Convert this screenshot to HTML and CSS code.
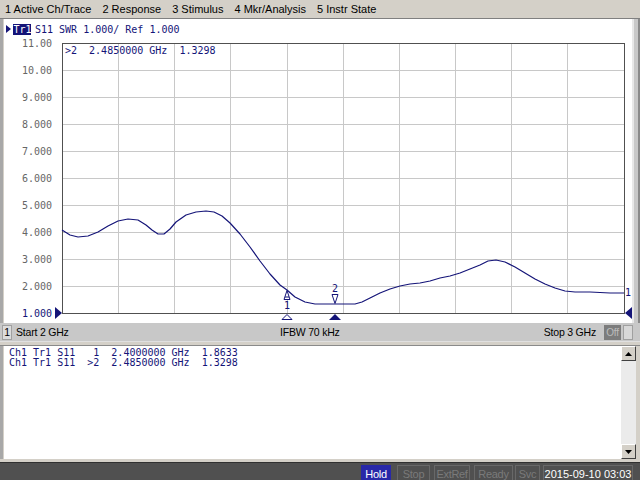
FILE: index.html
```html
<!DOCTYPE html>
<html>
<head>
<meta charset="utf-8">
<link rel="stylesheet" href="styles.css">
</head>
<body>
<div class="menubar">
  <span class="menu-item">1 Active Ch/Trace</span>
  <span class="menu-item">2 Response</span>
  <span class="menu-item">3 Stimulus</span>
  <span class="menu-item">4 Mkr/Analysis</span>
  <span class="menu-item">5 Instr State</span>
</div>
<div class="chartwin">
  <div class="chartrow">
    <div class="chartpane">
      <svg class="plot" width="628" height="304" viewBox="4 19 628 304" xmlns="http://www.w3.org/2000/svg">
        <g class="grid">
          <line x1="118" y1="43" x2="118" y2="313"/>
          <line x1="174" y1="43" x2="174" y2="313"/>
          <line x1="230" y1="43" x2="230" y2="313"/>
          <line x1="287" y1="43" x2="287" y2="313"/>
          <line x1="343" y1="43" x2="343" y2="313"/>
          <line x1="399" y1="43" x2="399" y2="313"/>
          <line x1="455" y1="43" x2="455" y2="313"/>
          <line x1="511" y1="43" x2="511" y2="313"/>
          <line x1="567" y1="43" x2="567" y2="313"/>
          <line x1="62" y1="70" x2="624" y2="70"/>
          <line x1="62" y1="97" x2="624" y2="97"/>
          <line x1="62" y1="124" x2="624" y2="124"/>
          <line x1="62" y1="151" x2="624" y2="151"/>
          <line x1="62" y1="178" x2="624" y2="178"/>
          <line x1="62" y1="205" x2="624" y2="205"/>
          <line x1="62" y1="232" x2="624" y2="232"/>
          <line x1="62" y1="259" x2="624" y2="259"/>
          <line x1="62" y1="286" x2="624" y2="286"/>
        </g>
        <rect class="frame" x="62.5" y="43.5" width="562" height="270"/>
        <g class="ylab">
          <text x="52" y="47">11.00</text>
          <text x="52" y="74">10.00</text>
          <text x="52" y="101">9.000</text>
          <text x="52" y="128">8.000</text>
          <text x="52" y="155">7.000</text>
          <text x="52" y="182">6.000</text>
          <text x="52" y="209">5.000</text>
          <text x="52" y="236">4.000</text>
          <text x="52" y="263">3.000</text>
          <text x="52" y="290">2.000</text>
          <text x="52" y="317" class="ref">1.000</text>
        </g>
        <polygon class="blue" points="6,25 11,29 6,33"/>
        <rect class="trbg" x="13" y="24" width="18" height="11"/>
        <text class="trtxt" x="13.5" y="32.5">Tr1</text>
        <text class="hdr" x="35" y="32.5">S11 SWR 1.000/ Ref 1.000</text>
        <text class="hdr" x="65" y="53.5" xml:space="preserve">&gt;2  2.4850000 GHz  1.3298</text>
        <polyline class="trace" points="62,230 70,235 78,237 88,236 98,232 108,226 118,221 128,219 138,220 146,225 152,230 158,234 164,234 170,229 176,222 186,215 196,212 206,211 214,212 222,216 230,223 240,234 250,247 260,261 270,274 280,285 287,290 295,297 305,302 315,304 325,304 335,304 345,304 355,304 362,302 370,298 380,293 390,289 400,286 410,284 420,283 430,281 440,278 450,276 460,273 470,269 480,265 488,261 496,260 505,262 515,267 525,273 535,279 545,284 555,288 565,291 575,292 590,292 610,293 624,293"/>
        <polygon class="blue" points="55,307 62,313 55,319"/>
        <polygon class="blue" points="632,307 625,313 632,319"/>
        <text class="mk" x="625" y="296">1</text>
        <polygon class="mkout" points="287,290.5 290,299.5 284,299.5"/>
        <line class="mkline" x1="285" y1="297" x2="289" y2="297"/>
        <text class="mk" x="284" y="309">1</text>
        <polygon class="mkout" points="335,303.5 332,294.5 338,294.5"/>
        <text class="mk" x="332" y="292">2</text>
        <polygon class="mkout" points="287,314.5 292,319.5 282,319.5"/>
        <polygon class="blue" points="335,314 341,320 329,320"/>
      </svg>
    </div>
    <div class="vedge"></div>
  </div>
  <div class="chartbar">
    <span class="chnum">1</span>
    <span class="start">Start 2 GHz</span>
    <span class="ifbw">IFBW 70 kHz</span>
    <span class="stop">Stop 3 GHz</span>
    <span class="off">Off</span>
    <span class="blank"></span>
  </div>
</div>
<div class="sep"></div>
<div class="mkrwin">
  <div class="mkrpane">
    <pre class="mkrlist">Ch1 Tr1 S11   1  2.4000000 GHz  1.8633
Ch1 Tr1 S11  &gt;2  2.4850000 GHz  1.3298</pre>
  </div>
  <div class="scroll">
    <div class="sbtn"><svg width="7" height="4" viewBox="0 0 7 4"><polygon points="3.5,0 7,4 0,4" fill="#000"/></svg></div>
    <div class="strack"></div>
    <div class="sbtn"><svg width="7" height="4" viewBox="0 0 7 4"><polygon points="0,0 7,0 3.5,4" fill="#000"/></svg></div>
  </div>
</div>
<div class="status">
  <span class="st hold">Hold</span>
  <span class="st dim w-stop">Stop</span>
  <span class="st dim w-ext">ExtRef</span>
  <span class="st dim w-ready">Ready</span>
  <span class="st dim w-svc">Svc</span>
  <span class="st date">2015-09-10 03:03</span>
</div>
</body>
</html>
```
FILE: styles.css
```css
html, body {
  margin: 0;
  padding: 0;
}
body {
  width: 640px;
  height: 480px;
  overflow: hidden;
  background: #d4d0c8;
  font-family: "Liberation Sans", Arial, sans-serif;
  font-size: 11px;
  color: #000;
}
.menubar {
  height: 18px;
  border-bottom: 1px solid #808080;
  display: flex;
  align-items: center;
  gap: 11px;
  padding-left: 5px;
  font-size: 11px;
}
.chartwin {
  display: flex;
  flex-direction: column;
}
.chartrow {
  display: flex;
  height: 304px;
  border-left: 3px solid #a8a8a8;
  padding-left: 1px;
  background: #d4d0c8;
}
.chartpane {
  width: 628px;
  height: 304px;
  background: #fff;
}
.plot {
  display: block;
}
.vedge {
  width: 4px;
  border-left: 2px solid #e8e8e8;
  border-right: 2px solid #8a8a8a;
  background: #c8c8c8;
}
.grid line {
  stroke: #c8c8c8;
  stroke-width: 1;
  shape-rendering: crispEdges;
}
.frame {
  fill: none;
  stroke: #505050;
  stroke-width: 1;
  shape-rendering: crispEdges;
}
.ylab text {
  font-family: "DejaVu Sans Mono", monospace;
  font-size: 10px;
  fill: #666;
  text-anchor: end;
}
.ylab text.ref {
  fill: #141478;
}
.blue {
  fill: #141478;
}
.trbg {
  fill: #141478;
}
.trtxt {
  font-family: "DejaVu Sans Mono", monospace;
  font-size: 10px;
  fill: #fff;
}
.hdr {
  font-family: "DejaVu Sans Mono", monospace;
  font-size: 10px;
  fill: #141478;
  white-space: pre;
}
.trace {
  fill: none;
  stroke: #141478;
  stroke-width: 1.2;
  stroke-linejoin: round;
}
.mk {
  font-family: "DejaVu Sans Mono", monospace;
  font-size: 10px;
  fill: #141478;
}
.mkout {
  fill: #fff;
  stroke: #141478;
  stroke-width: 1;
}
.mkline {
  stroke: #141478;
  stroke-width: 1;
}
.chartbar {
  height: 18px;
  display: flex;
  align-items: center;
  background: #c8c8c8;
  border-bottom: 1px solid #e0e0e0;
  white-space: nowrap;
  font-size: 10.5px;
  letter-spacing: -0.2px;
}
.chnum {
  width: 10px;
  height: 15px;
  margin-left: 2px;
  background: #dcdcdc;
  border: 1px solid #a0a0a0;
  box-sizing: border-box;
  text-align: center;
  line-height: 13px;
}
.start {
  margin-left: 4px;
  width: 264px;
}
.ifbw {
  width: 263px;
}
.stop {
  width: 53px;
  text-align: right;
}
.off {
  margin-left: 8px;
  width: 17px;
  height: 15px;
  background: #7c7c7c;
  color: #bdbdbd;
  text-align: center;
  line-height: 15px;
  font-size: 10px;
}
.blank {
  margin-left: 2px;
  width: 10px;
  height: 15px;
  border: 1px solid #a0a0a0;
  box-sizing: border-box;
  background: #d8d8d8;
}
.sep {
  height: 3px;
  border-bottom: 1px solid #8a8a8a;
}
.mkrwin {
  display: flex;
  height: 113px;
  border-left: 3px solid #a8a8a8;
  padding-left: 1px;
}
.mkrpane {
  width: 617px;
  background: #fff;
}
.mkrlist {
  margin: 0;
  padding: 2px 0 0 5px;
  font-family: "DejaVu Sans Mono", monospace;
  font-size: 10px;
  line-height: 10px;
  color: #141478;
}
.scroll {
  width: 15px;
  display: flex;
  flex-direction: column;
  background: #f0f0f0;
}
.sbtn {
  height: 15px;
  background: #d4d0c8;
  border: 1px solid;
  border-color: #fff #404040 #404040 #fff;
  box-sizing: border-box;
  display: flex;
  align-items: center;
  justify-content: center;
}
.strack {
  flex: 1;
  background: #ebebeb;
}
.status {
  margin-top: 3px;
  height: 20px;
  border-top: 1px solid #303030;
  background: #505050;
  display: flex;
  align-items: center;
  padding-left: 361px;
  box-sizing: border-box;
  white-space: nowrap;
}
.st {
  height: 16px;
  line-height: 16px;
  border: 1px solid #686868;
  box-sizing: border-box;
  display: flex;
  justify-content: center;
  font-size: 11px;
  letter-spacing: -0.3px;
  margin-right: 4px;
}
.hold {
  width: 30px;
  background: #2828a8;
  color: #fff;
  border-color: #2828a8;
  margin-right: 6px;
}
.dim {
  color: #7a7a7a;
}
.w-stop { width: 33px; }
.w-ext { width: 36px; }
.w-ready { width: 39px; margin-right: 2px; }
.w-svc { width: 25px; margin-right: 3px; }
.date {
  width: 90px;
  color: #fff;
  letter-spacing: 0;
}
```
